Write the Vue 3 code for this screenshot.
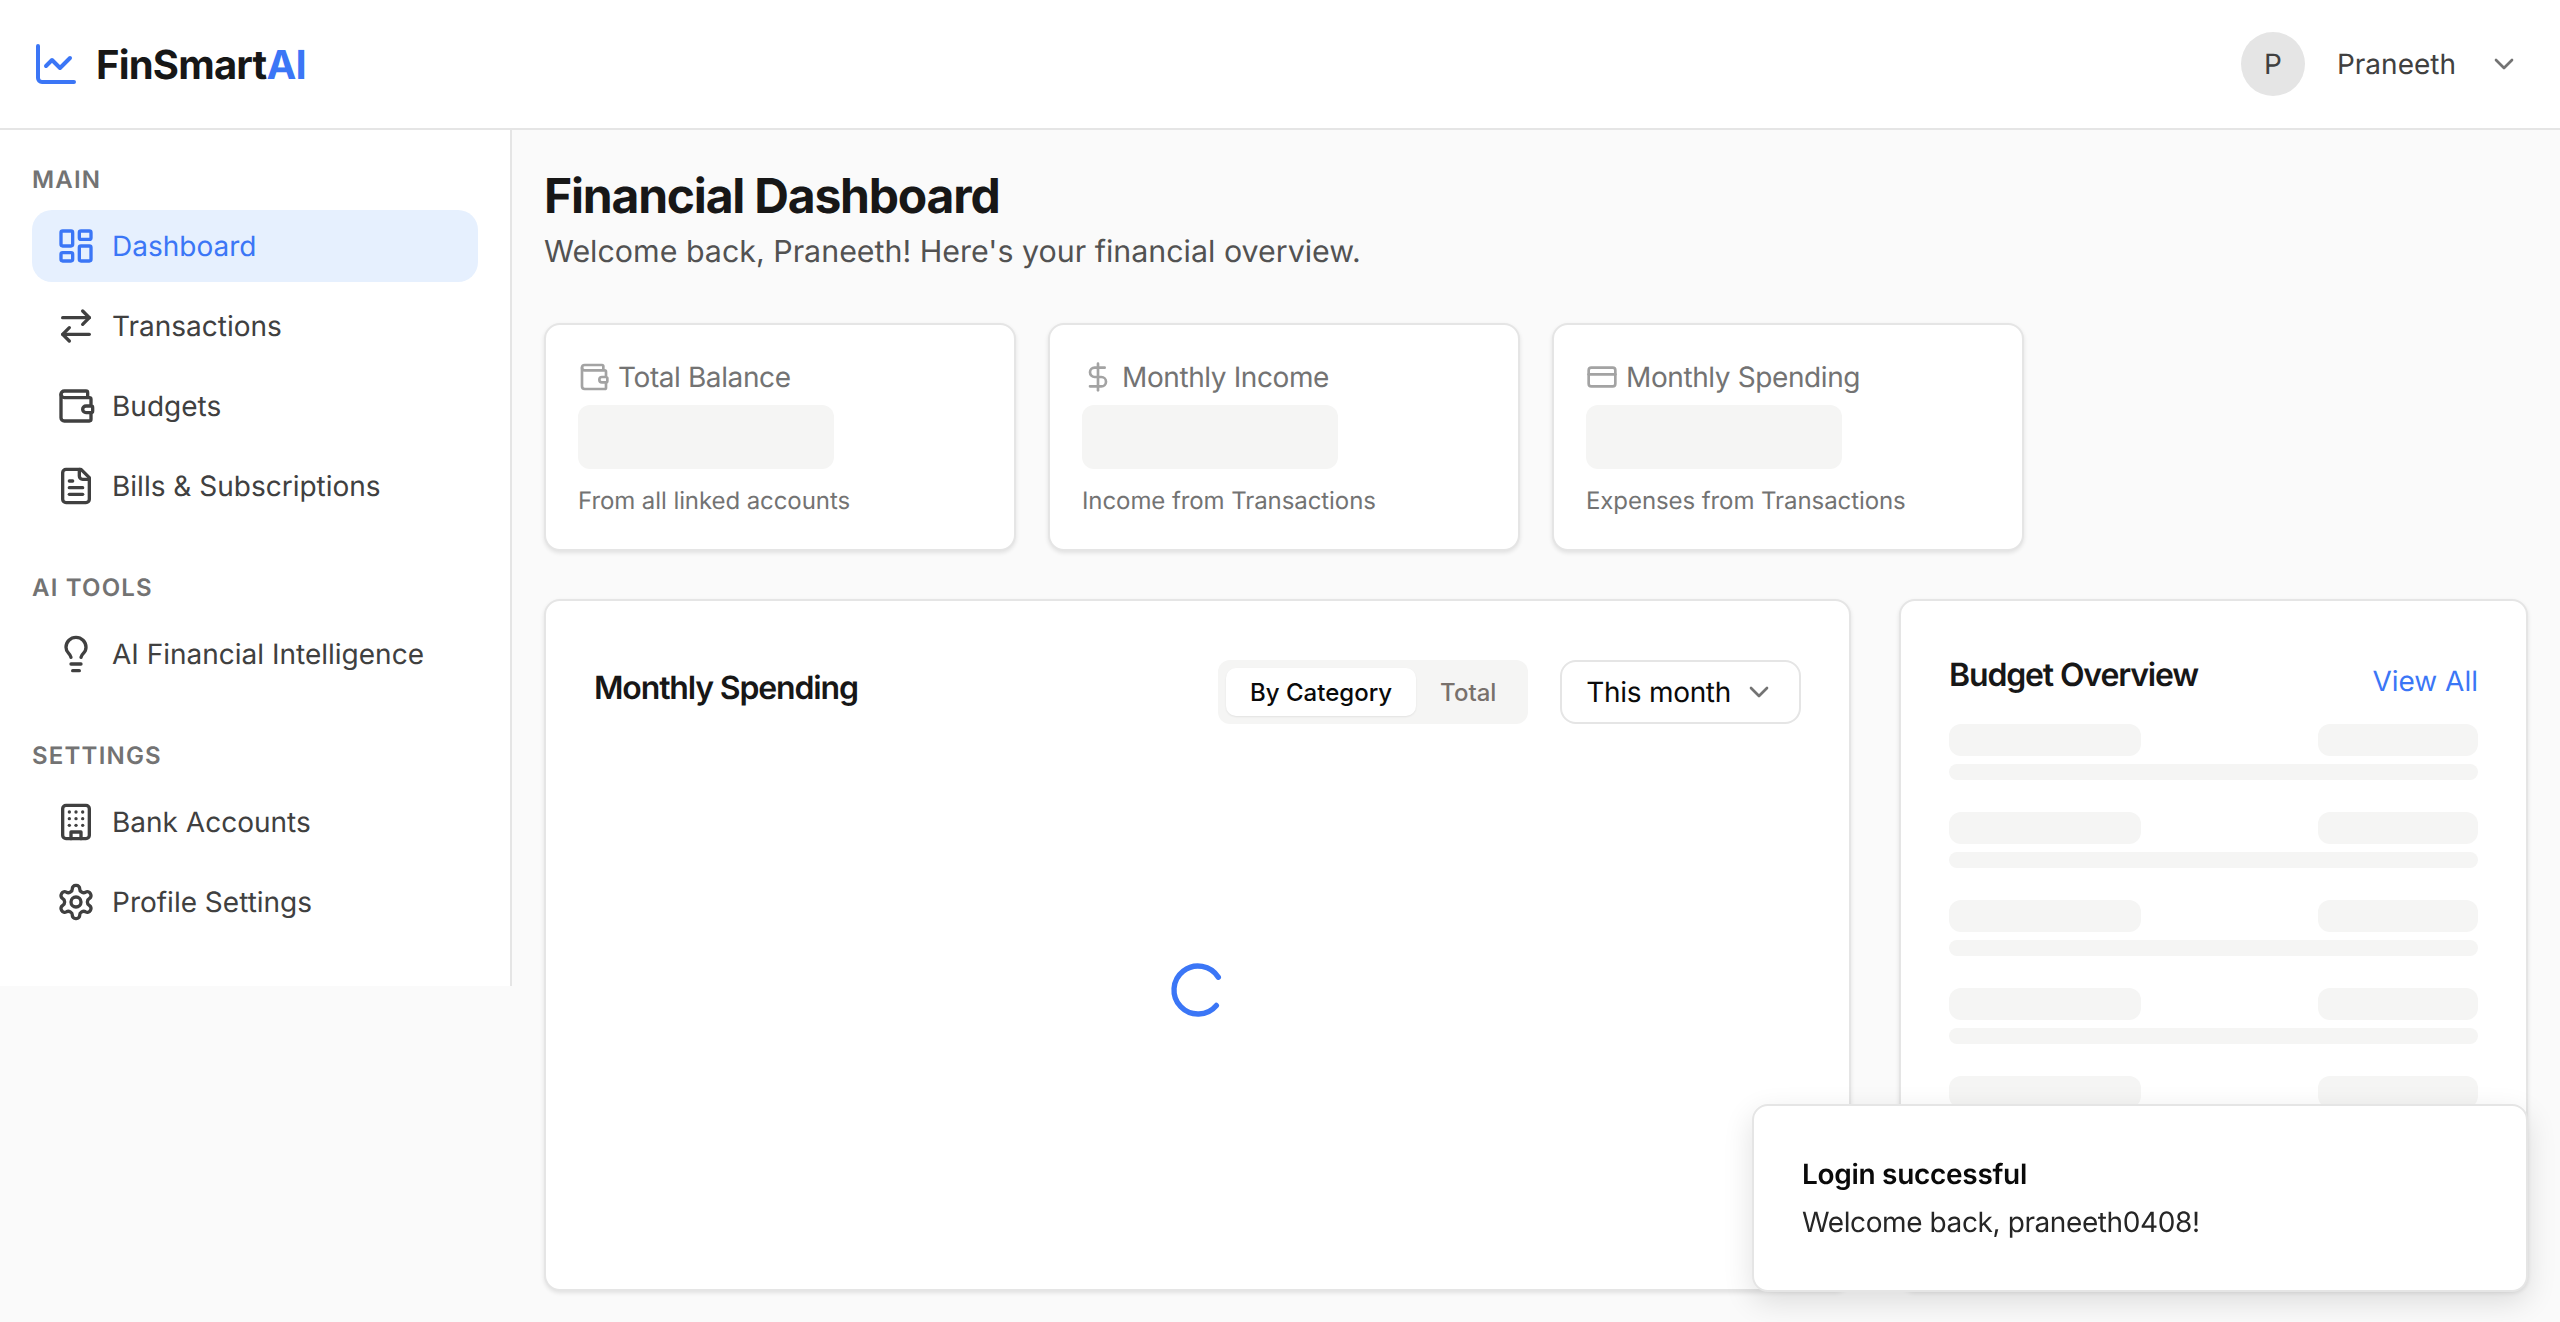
<template>
  <div class="app">
    <header class="topbar">
      <div class="brand">
        <svg class="ic logo-ic" viewBox="0 0 24 24"><path d="M3 3v16a2 2 0 0 0 2 2h16" /><path d="m19 9-5 5-4-4-3 3" /></svg>
        <span class="brand-name">FinSmart<span class="blue">AI</span></span>
      </div>
      <div class="user">
        <div class="avatar">P</div>
        <span class="user-name">Praneeth</span>
        <svg class="ic user-chev" viewBox="0 0 24 24"><path d="m6 9 6 6 6-6" /></svg>
      </div>
    </header>

    <div class="body">
      <aside class="sidebar">
        <section v-for="group in navGroups" :key="group.title" class="nav-group">
          <div class="nav-title">{{ group.title }}</div>
          <a v-for="item in group.items" :key="item.label" class="nav-item" :class="{ active: item.active }">
            <svg class="ic nav-ic" viewBox="0 0 24 24" v-html="icons[item.icon]"></svg>
            <span>{{ item.label }}</span>
          </a>
        </section>
      </aside>

      <main class="main">
        <h1 class="page-title">Financial Dashboard</h1>
        <p class="page-sub">Welcome back, Praneeth! Here's your financial overview.</p>

        <div class="stats">
          <div v-for="stat in stats" :key="stat.label" class="stat card">
            <div class="stat-label">
              <svg class="ic stat-ic" viewBox="0 0 24 24" v-html="icons[stat.icon]"></svg>
              <span>{{ stat.label }}</span>
            </div>
            <div class="skel stat-skel"></div>
            <div class="stat-note">{{ stat.note }}</div>
          </div>
        </div>

        <div class="panels">
          <div class="panel card">
            <div class="panel-head">
              <h2 class="panel-title spending-title">Monthly Spending</h2>
              <div class="controls">
                <div class="toggle">
                  <button class="tog on">By Category</button>
                  <button class="tog">Total</button>
                </div>
                <div class="select">
                  <span>This month</span>
                  <svg class="ic sel-chev" viewBox="0 0 24 24"><path d="m6 9 6 6 6-6" /></svg>
                </div>
              </div>
            </div>
            <div class="chart-area">
              <svg class="ic spinner" viewBox="0 0 24 24"><path d="M21 12a9 9 0 1 1-6.219-8.56" /></svg>
            </div>
          </div>

          <div class="panel card budget">
            <div class="budget-head">
              <h2 class="panel-title">Budget Overview</h2>
              <a class="view-all">View All</a>
            </div>
            <div v-for="n in 5" :key="n" class="budget-row">
              <div class="row-top">
                <div class="skel name-skel"></div>
                <div class="skel amt-skel"></div>
              </div>
              <div class="skel bar-skel"></div>
            </div>
          </div>
        </div>
      </main>
    </div>

    <div class="toast">
      <div class="toast-title">Login successful</div>
      <div class="toast-text">Welcome back, praneeth0408!</div>
    </div>
  </div>
</template>

<script setup>
const icons = {
  dashboard: '<rect x="3" y="3" width="7" height="9" rx="1"/><rect x="14" y="3" width="7" height="5" rx="1"/><rect x="14" y="12" width="7" height="9" rx="1"/><rect x="3" y="16" width="7" height="5" rx="1"/>',
  swap: '<path d="m16 3 4 4-4 4"/><path d="M20 7H4"/><path d="m8 21-4-4 4-4"/><path d="M4 17h16"/>',
  wallet: '<path d="M19 7V4a1 1 0 0 0-1-1H5a2 2 0 0 0 0 4h15a1 1 0 0 1 1 1v4h-3a2 2 0 0 0 0 4h3a1 1 0 0 0 1-1v-2a1 1 0 0 0-1-1"/><path d="M3 5v14a2 2 0 0 0 2 2h15a1 1 0 0 0 1-1v-4"/>',
  file: '<path d="M15 2H6a2 2 0 0 0-2 2v16a2 2 0 0 0 2 2h12a2 2 0 0 0 2-2V7Z"/><path d="M14 2v4a2 2 0 0 0 2 2h4"/><path d="M10 9H8"/><path d="M16 13H8"/><path d="M16 17H8"/>',
  bulb: '<path d="M15 14c.2-1 .7-1.7 1.5-2.5 1-.9 1.5-2.2 1.5-3.5A6 6 0 0 0 6 8c0 1 .2 2.2 1.5 3.5.7.7 1.3 1.5 1.5 2.5"/><path d="M9 18h6"/><path d="M10 22h4"/>',
  building: '<rect x="4" y="2" width="16" height="20" rx="2"/><path d="M9 22v-4h6v4"/><path d="M8 6h.01"/><path d="M16 6h.01"/><path d="M12 6h.01"/><path d="M12 10h.01"/><path d="M12 14h.01"/><path d="M16 10h.01"/><path d="M16 14h.01"/><path d="M8 10h.01"/><path d="M8 14h.01"/>',
  gear: '<path d="M12.22 2h-.44a2 2 0 0 0-2 2v.18a2 2 0 0 1-1 1.73l-.43.25a2 2 0 0 1-2 0l-.15-.08a2 2 0 0 0-2.73.73l-.22.38a2 2 0 0 0 .73 2.73l.15.1a2 2 0 0 1 1 1.72v.51a2 2 0 0 1-1 1.74l-.15.09a2 2 0 0 0-.73 2.73l.22.38a2 2 0 0 0 2.73.73l.15-.08a2 2 0 0 1 2 0l.43.25a2 2 0 0 1 1 1.73V20a2 2 0 0 0 2 2h.44a2 2 0 0 0 2-2v-.18a2 2 0 0 1 1-1.73l.43-.25a2 2 0 0 1 2 0l.15.08a2 2 0 0 0 2.73-.73l.22-.39a2 2 0 0 0-.73-2.73l-.15-.08a2 2 0 0 1-1-1.74v-.5a2 2 0 0 1 1-1.74l.15-.09a2 2 0 0 0 .73-2.73l-.22-.38a2 2 0 0 0-2.73-.73l-.15.08a2 2 0 0 1-2 0l-.43-.25a2 2 0 0 1-1-1.73V4a2 2 0 0 0-2-2z"/><circle cx="12" cy="12" r="3"/>',
  dollar: '<line x1="12" x2="12" y1="2" y2="22"/><path d="M17 5H9.5a3.5 3.5 0 0 0 0 7h5a3.5 3.5 0 0 1 0 7H6"/>',
  card: '<rect width="20" height="14" x="2" y="5" rx="2"/><line x1="2" x2="22" y1="10" y2="10"/>'
}

const navGroups = [
  {
    title: 'MAIN',
    items: [
      { label: 'Dashboard', icon: 'dashboard', active: true },
      { label: 'Transactions', icon: 'swap' },
      { label: 'Budgets', icon: 'wallet' },
      { label: 'Bills & Subscriptions', icon: 'file' }
    ]
  },
  {
    title: 'AI TOOLS',
    items: [{ label: 'AI Financial Intelligence', icon: 'bulb' }]
  },
  {
    title: 'SETTINGS',
    items: [
      { label: 'Bank Accounts', icon: 'building' },
      { label: 'Profile Settings', icon: 'gear' }
    ]
  }
]

const stats = [
  { label: 'Total Balance', icon: 'wallet', note: 'From all linked accounts' },
  { label: 'Monthly Income', icon: 'dollar', note: 'Income from Transactions' },
  { label: 'Monthly Spending', icon: 'card', note: 'Expenses from Transactions' }
]
</script>

<style>
html,
body {
  margin: 0;
  background: #fafafa;
}
</style>

<style scoped>
.app {
  font-family: Inter, "Noto Sans", sans-serif;
  color: #171717;
  min-height: 1322px;
  background: #fafafa;
  text-rendering: geometricPrecision;
}

.ic {
  fill: none;
  stroke: currentColor;
  stroke-width: 2;
  stroke-linecap: round;
  stroke-linejoin: round;
  flex-shrink: 0;
}

.topbar {
  height: 128px;
  background: #fff;
  border-bottom: 2px solid #e5e5e5;
  display: flex;
  align-items: center;
  justify-content: space-between;
  padding: 0 40px 0 32px;
}

.brand {
  display: flex;
  align-items: center;
  gap: 16px;
}

.logo-ic {
  width: 48px;
  height: 48px;
  color: #3b76f6;
}

.brand-name {
  font-size: 40px;
  font-weight: 700;
  letter-spacing: -0.8px;
}

.blue {
  color: #3b76f6;
}

.user {
  display: flex;
  align-items: center;
  gap: 32px;
  color: #404040;
  font-size: 28px;
}

.avatar {
  width: 64px;
  height: 64px;
  border-radius: 50%;
  background: #e5e5e5;
  display: flex;
  align-items: center;
  justify-content: center;
  font-size: 28px;
}

.user-chev {
  width: 32px;
  height: 32px;
  color: #737373;
}

.body {
  display: flex;
  align-items: flex-start;
}

.sidebar {
  width: 512px;
  background: #fff;
  border-right: 2px solid #e5e5e5;
  padding: 32px 32px 48px;
  box-sizing: border-box;
  flex-shrink: 0;
}

.nav-group + .nav-group {
  margin-top: 48px;
}

.nav-title {
  font-size: 24px;
  line-height: 32px;
  font-weight: 600;
  letter-spacing: 1.2px;
  color: #737373;
  padding-top: 2px;
  margin-bottom: 14px;
}

.nav-item {
  display: flex;
  align-items: center;
  gap: 16px;
  height: 72px;
  padding: 0 24px;
  border-radius: 20px;
  font-size: 28px;
  font-weight: 400;
  color: #404040;
}

.nav-item + .nav-item {
  margin-top: 8px;
}

.nav-item.active {
  background: #e6f0fe;
  color: #3b76f6;
}

.nav-ic {
  width: 40px;
  height: 40px;
}

.main {
  flex: 1;
  min-width: 0;
  padding: 34px 32px 32px;
}

.page-title {
  margin: 0;
  font-size: 48px;
  line-height: 64px;
  font-weight: 700;
  letter-spacing: -1.2px;
  color: #171717;
}

.page-sub {
  margin: 0 0 47px;
  font-size: 30.4px;
  line-height: 48px;
  color: #525252;
}

.card {
  background: #fff;
  border: 2px solid #e5e5e5;
  border-radius: 16px;
  box-shadow: 0 2px 4px rgba(0, 0, 0, 0.1);
  box-sizing: border-box;
}

.stats {
  display: grid;
  grid-template-columns: repeat(4, 1fr);
  gap: 32px;
  margin-bottom: 48px;
}

.stat {
  padding: 32px;
}

.stat-label {
  display: flex;
  align-items: center;
  gap: 8px;
  font-size: 28px;
  line-height: 40px;
  letter-spacing: -0.4px;
  color: #737373;
}

.stat-ic {
  width: 32px;
  height: 32px;
  color: #a3a3a3;
}

.skel {
  background: #f5f5f4;
}

.stat-skel {
  width: 256px;
  height: 64px;
  border-radius: 12px;
  margin: 8px 0 16px;
}

.stat-note {
  font-size: 24px;
  line-height: 32px;
  letter-spacing: -0.08px;
  color: #737373;
}

.panels {
  display: grid;
  grid-template-columns: 1fr 629px;
  gap: 48px;
}

.panel {
  padding: 48px;
  height: 692px;
  overflow: hidden;
}

.panel-head {
  display: flex;
  align-items: center;
  justify-content: space-between;
  margin-top: 11px;
}

.panel-title {
  margin: 0;
  font-size: 32px;
  line-height: 52px;
  font-weight: 600;
  letter-spacing: -1.15px;
  color: #171717;
}

.spending-title {
  margin-top: 1px;
  margin-bottom: 9px;
}

.controls {
  display: flex;
  align-items: center;
  gap: 32px;
}

.toggle {
  display: flex;
  background: #f5f5f4;
  border-radius: 12px;
  padding: 8px;
  height: 64px;
  box-sizing: border-box;
}

.tog {
  border: 0;
  background: transparent;
  font: inherit;
  font-size: 24px;
  font-weight: 500;
  color: #78716c;
  padding: 0 24px;
  border-radius: 10px;
}

.tog.on {
  background: #fff;
  color: #0a0a0a;
  box-shadow: 0 1px 2px rgba(0, 0, 0, 0.08);
}

.select {
  display: flex;
  align-items: center;
  gap: 12px;
  height: 64px;
  box-sizing: border-box;
  border: 2px solid #e5e5e5;
  border-radius: 16px;
  background: #fff;
  padding: 0 24px;
  font-size: 28px;
  letter-spacing: -0.3px;
  color: #0a0a0a;
}

.sel-chev {
  width: 32px;
  height: 32px;
  color: #737373;
}

.chart-area {
  display: flex;
  justify-content: center;
  padding-top: 234px;
}

.spinner {
  width: 64px;
  height: 64px;
  color: #3b76f6;
  transform: rotate(40deg);
}

.budget-head {
  display: flex;
  align-items: center;
  justify-content: space-between;
  margin-bottom: 23px;
}

.view-all {
  font-size: 28px;
  color: #3b76f6;
  margin-top: 12px;
}

.budget-row {
  margin-bottom: 32px;
}

.row-top {
  display: flex;
  justify-content: space-between;
  margin-bottom: 8px;
}

.name-skel {
  width: 192px;
  height: 32px;
  border-radius: 12px;
}

.amt-skel {
  width: 160px;
  height: 32px;
  border-radius: 12px;
}

.bar-skel {
  height: 16px;
  border-radius: 8px;
}

.toast {
  position: fixed;
  right: 32px;
  bottom: 30px;
  width: 776px;
  box-sizing: border-box;
  background: #fff;
  border: 2px solid #e5e5e5;
  border-radius: 16px;
  padding: 48px;
  box-shadow: 0 10px 30px rgba(0, 0, 0, 0.12);
}

.toast-title {
  font-size: 28px;
  line-height: 40px;
  font-weight: 600;
  letter-spacing: -0.3px;
  color: #0a0a0a;
}

.toast-text {
  font-size: 28px;
  line-height: 40px;
  letter-spacing: -0.4px;
  margin-top: 8px;
  color: #262626;
}
</style>
